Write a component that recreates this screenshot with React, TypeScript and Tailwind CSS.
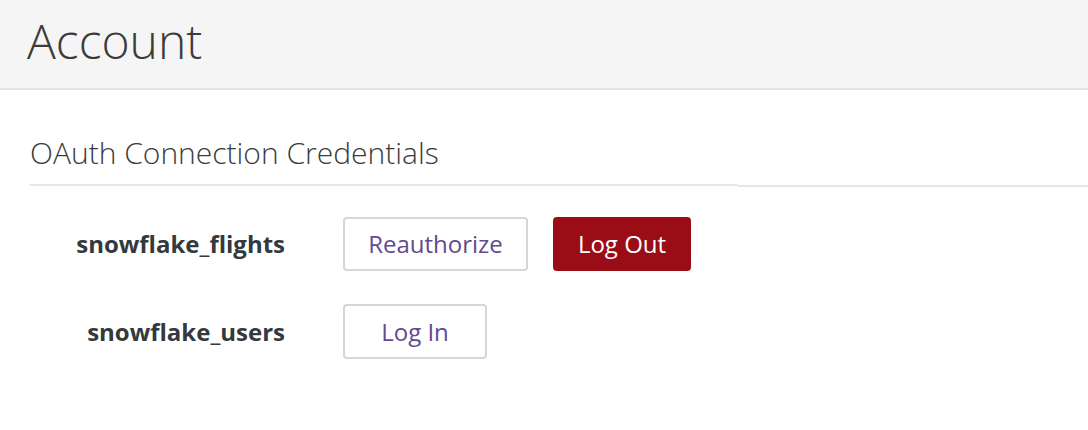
import React from "react";

export default function App() {
  const font = { fontFamily: '"Open Sans", "Noto Sans", sans-serif' };
  return (
    <div className="w-[1088px] h-[430px] bg-white overflow-hidden" style={font}>
      <div className="h-[90px] bg-[#f5f5f5] border-b-2 border-[#e4e4e4] flex items-center pl-[27px]">
        <h1 className="text-[48px] font-light text-[#3b3b3b] leading-none -mt-[6px]">Account</h1>
      </div>
      <div className="flex items-end pt-[40px]">
        <div className="ml-[30px] w-[708px] border-b-2 border-[#e6e6e6] mb-px pb-[8px]">
          <h2 className="text-[30px] font-light text-[#3b3b3b] leading-[46px]">OAuth Connection Credentials</h2>
        </div>
        <div className="flex-1 border-b-2 border-[#e6e6e6]" />
      </div>
      <div className="flex flex-col gap-[33px] pt-[30px] pl-[30px]">
        <div className="flex items-center">
          <div className="w-[255px] text-right text-[24px] font-bold text-[#33393c]">snowflake_flights</div>
          <div className="flex items-center gap-[25px] ml-[58px]">
            <button className="h-[54px] w-[185px] border-2 border-[#d6d6d6] rounded-[4px] bg-white text-[24px] text-[#634a8f]">Reauthorize</button>
            <button className="h-[54px] w-[138px] rounded-[4px] bg-[#9a0c16] text-[24px] text-white">Log Out</button>
          </div>
        </div>
        <div className="flex items-center">
          <div className="w-[255px] text-right text-[24px] font-bold text-[#33393c]">snowflake_users</div>
          <div className="flex items-center gap-[25px] ml-[58px]">
            <button className="h-[55px] w-[144px] border-2 border-[#d6d6d6] rounded-[4px] bg-white text-[24px] text-[#634a8f]">Log In</button>
          </div>
        </div>
      </div>
    </div>
  );
}
